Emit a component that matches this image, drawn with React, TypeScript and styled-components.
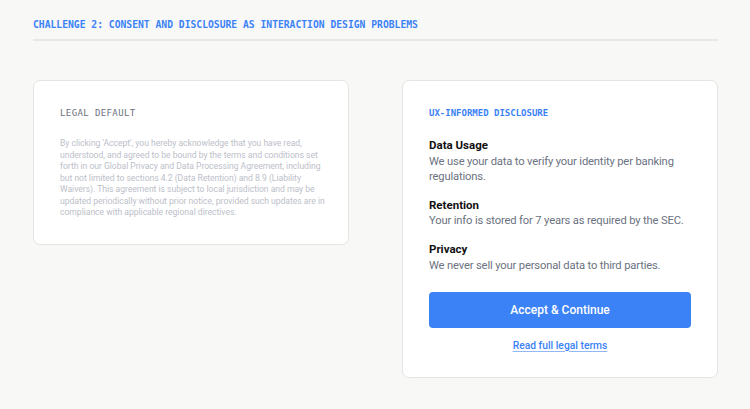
import React from "react";
import styled, { createGlobalStyle } from "styled-components";

const GlobalStyle = createGlobalStyle`
  html, body {
    margin: 0;
    padding: 0;
    background: #f8f8f7;
  }
  body {
    font-family: Roboto, "Noto Sans", sans-serif;
  }
`;

const StyledPage = styled.div`
  width: 750px;
  height: 409px;
  box-sizing: border-box;
  padding: 19px 32px 0 33px;
  display: flex;
  flex-direction: column;
`;

const StyledHeader = styled.h1`
  margin: 0;
  padding-bottom: 8px;
  border-bottom: 2px solid #e8e8e6;
  font-family: "DejaVu Sans Mono", "Liberation Mono", monospace;
  font-size: 9.7px;
  font-weight: 700;
  color: #3b82f6;
  line-height: 12px;
`;

const StyledColumns = styled.div`
  display: grid;
  grid-template-columns: 316px 316px;
  justify-content: space-between;
  align-items: start;
  margin-top: 39px;
`;

const StyledCard = styled.section`
  background: #ffffff;
  border: 1px solid #e4e4e2;
  border-radius: 7px;
  padding: 26px 26px 25px 26px;
  display: flex;
  flex-direction: column;
`;

const StyledCardLabel = styled.div<{ $accent?: boolean }>`
  font-family: "DejaVu Sans Mono", "Liberation Mono", monospace;
  font-size: 9px;
  line-height: 12px;
  font-weight: ${(p) => (p.$accent ? 700 : 400)};
  color: ${(p) => (p.$accent ? "#3b82f6" : "#6b7280")};
  letter-spacing: ${(p) => (p.$accent ? "0" : "0.4px")};
`;

const StyledLegalText = styled.p`
  margin: 19px 0 0;
  font-size: 8.6px;
  line-height: 11.5px;
  letter-spacing: -0.03px;
  color: #bcc0c9;
  white-space: nowrap;
`;

const StyledLegalLine = styled.span`
  display: block;
`;

const StyledSections = styled.div`
  display: flex;
  flex-direction: column;
  gap: 13px;
  margin-top: 18px;
`;

const StyledSection = styled.div`
  display: flex;
  flex-direction: column;
`;

const StyledSectionTitle = styled.h3`
  margin: 0;
  font-size: 11.5px;
  line-height: 16.5px;
  font-weight: 700;
  color: #111111;
`;

const StyledSectionText = styled.p`
  margin: 0;
  font-size: 11.2px;
  line-height: 15px;
  letter-spacing: -0.15px;
  color: #6b7280;
`;

const StyledButton = styled.button`
  margin-top: 19px;
  height: 36px;
  border: none;
  border-radius: 4px;
  background: #3b82f6;
  color: #ffffff;
  font-family: inherit;
  font-size: 12px;
  font-weight: 500;
  cursor: pointer;
`;

const StyledLink = styled.a`
  margin-top: 12px;
  align-self: center;
  font-size: 10.3px;
  line-height: 12px;
  font-weight: 500;
  color: #3b82f6;
  text-decoration: underline;
  text-decoration-color: #93b8f8;
  text-underline-offset: 2px;
  cursor: pointer;
`;

const legalLines = [
  "By clicking 'Accept', you hereby acknowledge that you have read,",
  "understood, and agreed to be bound by the terms and conditions set",
  "forth in our Global Privacy and Data Processing Agreement, including",
  "but not limited to sections 4.2 (Data Retention) and 8.9 (Liability",
  "Waivers). This agreement is subject to local jurisdiction and may be",
  "updated periodically without prior notice, provided such updates are in",
  "compliance with applicable regional directives.",
];

const sections = [
  {
    title: "Data Usage",
    text: "We use your data to verify your identity per banking regulations.",
  },
  {
    title: "Retention",
    text: "Your info is stored for 7 years as required by the SEC.",
  },
  {
    title: "Privacy",
    text: "We never sell your personal data to third parties.",
  },
];

export default function App() {
  return (
    <>
      <GlobalStyle />
      <StyledPage>
        <StyledHeader>
          CHALLENGE 2: CONSENT AND DISCLOSURE AS INTERACTION DESIGN PROBLEMS
        </StyledHeader>
        <StyledColumns>
          <StyledCard>
            <StyledCardLabel>LEGAL DEFAULT</StyledCardLabel>
            <StyledLegalText>
              {legalLines.map((line) => (
                <StyledLegalLine key={line}>{line}</StyledLegalLine>
              ))}
            </StyledLegalText>
          </StyledCard>
          <StyledCard>
            <StyledCardLabel $accent>UX-INFORMED DISCLOSURE</StyledCardLabel>
            <StyledSections>
              {sections.map((s) => (
                <StyledSection key={s.title}>
                  <StyledSectionTitle>{s.title}</StyledSectionTitle>
                  <StyledSectionText>{s.text}</StyledSectionText>
                </StyledSection>
              ))}
            </StyledSections>
            <StyledButton type="button">Accept &amp; Continue</StyledButton>
            <StyledLink>Read full legal terms</StyledLink>
          </StyledCard>
        </StyledColumns>
      </StyledPage>
    </>
  );
}
